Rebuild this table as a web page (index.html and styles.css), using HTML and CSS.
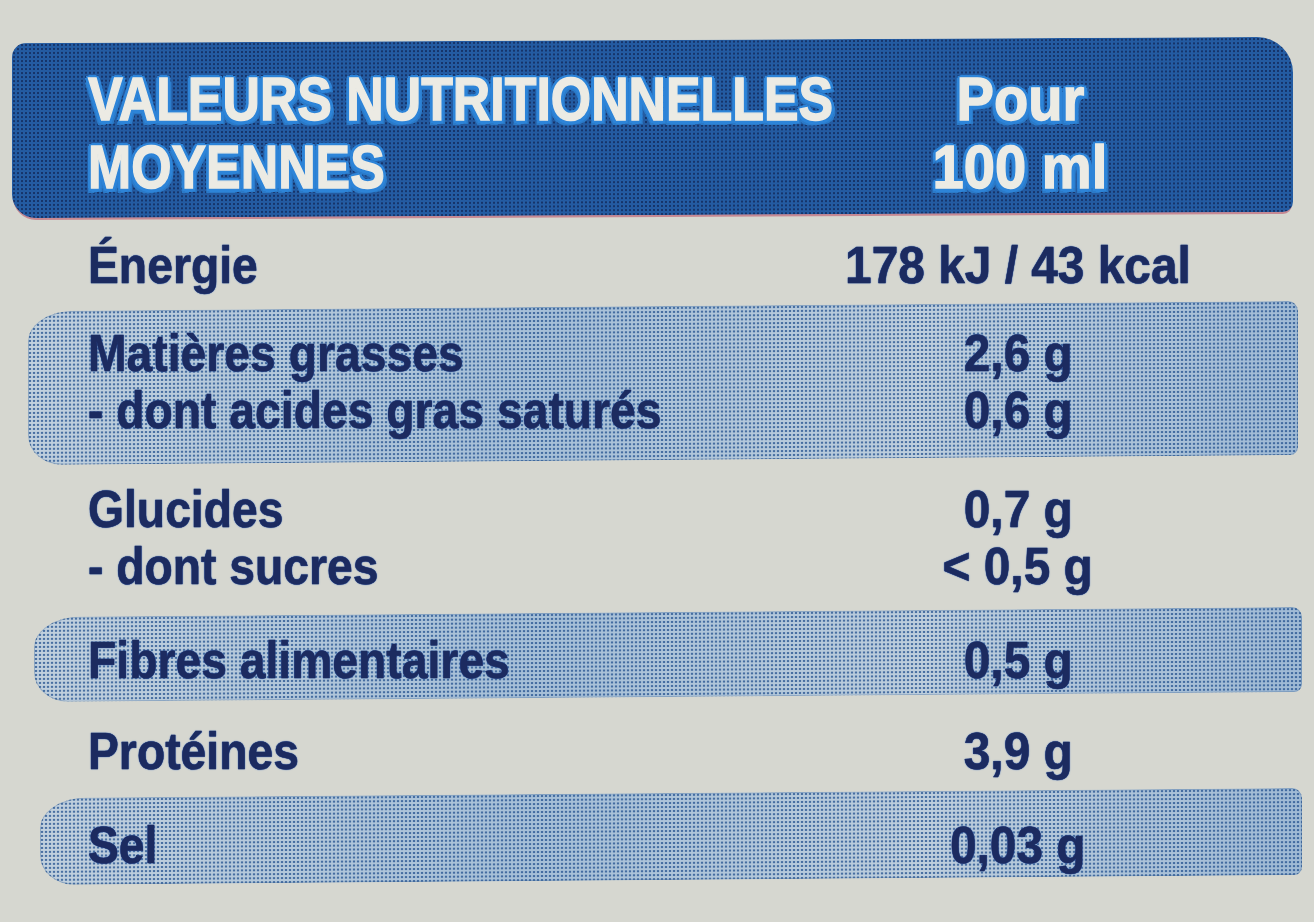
FILE: index.html
```html
<!DOCTYPE html>
<html lang="fr">
<head>
<meta charset="utf-8">
<title>Valeurs nutritionnelles moyennes</title>
<link rel="stylesheet" href="styles.css">
</head>
<body>
<main class="label">
  <header class="head">
    <div class="head-title">
      <span class="hline">VALEURS NUTRITIONNELLES</span>
      <span class="hline">MOYENNES</span>
    </div>
    <div class="head-per">
      <span class="hline">Pour</span>
      <span class="hline">100 ml</span>
    </div>
  </header>

  <section class="row energy">
    <div class="names"><span class="t">Énergie</span></div>
    <div class="vals"><span class="v">178 kJ / 43 kcal</span></div>
  </section>

  <section class="row band band-fat">
    <div class="names"><span class="t">Matières grasses</span><span class="t">- dont acides gras saturés</span></div>
    <div class="vals"><span class="v">2,6 g</span><span class="v">0,6 g</span></div>
  </section>

  <section class="row carbs">
    <div class="names"><span class="t">Glucides</span><span class="t">- dont sucres</span></div>
    <div class="vals"><span class="v">0,7 g</span><span class="v">&lt; 0,5 g</span></div>
  </section>

  <section class="row band band-fibre">
    <div class="names"><span class="t">Fibres alimentaires</span></div>
    <div class="vals"><span class="v">0,5 g</span></div>
  </section>

  <section class="row protein">
    <div class="names"><span class="t">Protéines</span></div>
    <div class="vals"><span class="v">3,9 g</span></div>
  </section>

  <section class="row band band-salt">
    <div class="names"><span class="t">Sel</span></div>
    <div class="vals"><span class="v">0,03 g</span></div>
  </section>
</main>
</body>
</html>
```

FILE: styles.css
```css
* { box-sizing: border-box; }

html, body {
  margin: 0;
  padding: 0;
}

body {
  background: #d6d7d0;
  font-family: "Liberation Sans", Arial, sans-serif;
  font-weight: 700;
  width: 1314px;
  height: 922px;
  overflow: hidden;
}

.label {
  padding-top: 40px;
}

/* ---------- header bar ---------- */
.head {
  position: relative;
  isolation: isolate;
  margin: 0 21px 0 12px;
  height: 175px;
  padding: 25px 143px 0 76px;
  display: grid;
  grid-template-columns: minmax(0, 1fr) 260px;
  color: #ecebe4;
  font-size: 61px;
  line-height: 68px;
}

.head::before {
  content: "";
  position: absolute;
  inset: 0;
  z-index: -1;
  border-radius: 14px 36px 10px 24px;
  background-color: #2a6cb8;
  background-image:
    radial-gradient(circle, rgba(18, 42, 92, 0.85) 1.1px, transparent 1.8px),
    radial-gradient(circle, rgba(22, 56, 118, 0.35) 0.9px, transparent 1.5px);
  background-size: 4px 4px, 4px 4px;
  background-position: 0 0, 2px 2px;
  box-shadow: 0 3px 0 -1px rgba(186, 72, 96, 0.55);
  transform: skewY(-0.28deg);
}

.head-title,
.head-per {
  display: flex;
  flex-direction: column;
  min-width: 0;
}

.head-title { align-items: flex-start; }
.head-per { align-items: center; }

.hline {
  display: inline-block;
  white-space: nowrap;
  -webkit-text-stroke: 1.4px #ecebe4;
  text-shadow:
    4px 0 0 #2d84d8, -4px 0 0 #2d84d8, 0 4px 0 #2d84d8, 0 -3px 0 #2d84d8,
    3px 3px 0 #2d84d8, -3px 3px 0 #2d84d8, 3px -2px 0 #2d84d8, -3px -2px 0 #2d84d8,
    5px 4px 0 #2b7ac8, -4px 5px 0 #2b7ac8;
}

.head-title .hline {
  transform: scaleX(0.85);
  transform-origin: left center;
}

.head-per .hline {
  transform: scaleX(0.92);
  transform-origin: center center;
}

/* ---------- rows ---------- */
.row {
  position: relative;
  isolation: isolate;
  margin: 0 14px 0 30px;
  padding: 0 162px 0 58px;
  display: grid;
  grid-template-columns: minmax(0, 1fr) 240px;
  color: #1c2b60;
  font-size: 52px;
  line-height: 57px;
}

.names,
.vals {
  display: flex;
  flex-direction: column;
  min-width: 0;
}

.names { align-items: flex-start; }
.vals { align-items: center; }

.t,
.v {
  display: inline-block;
  white-space: nowrap;
  -webkit-text-stroke: 0.5px #1c2b60;
  text-shadow: 0 0 1.5px #2f60b8, 0 0 1px #2f60b8;
}

.t {
  transform: scaleX(0.89);
  transform-origin: left center;
}

.v {
  transform: scaleX(0.92);
  transform-origin: center center;
}

.energy { margin-top: 22px; }
.carbs { margin-top: 21px; }
.protein { margin-top: 26px; }

.band-fat {
  margin-top: 12px;
  padding-top: 19px;
  padding-bottom: 21px;
  margin-left: 28px;
  padding-left: 60px;
  margin-right: 16px;
  padding-right: 160px;
}

.band-fibre {
  margin-top: 17px;
  padding-top: 20px;
  padding-bottom: 8px;
  margin-left: 34px;
  padding-left: 54px;
  margin-right: 12px;
  padding-right: 164px;
}

.band-salt {
  margin-top: 13px;
  padding-top: 24px;
  padding-bottom: 6px;
  margin-left: 40px;
  padding-left: 48px;
  margin-right: 12px;
  padding-right: 164px;
}

.band::before {
  content: "";
  position: absolute;
  inset: 0;
  z-index: -1;
  border-radius: 46px 10px 8px 34px / 30px 10px 8px 30px;
  background-color: #c2d1de;
  background-image:
    radial-gradient(circle, rgba(34, 80, 142, 0.85) 0.85px, transparent 1.35px),
    linear-gradient(100deg, rgba(120, 160, 200, 0.0) 0%, rgba(100, 150, 200, 0.3) 40%, rgba(120, 160, 200, 0.05) 70%, rgba(90, 140, 195, 0.34) 100%);
  background-size: 4px 4px, 100% 100%;
  box-shadow: inset 0 0 0 1px rgba(60, 100, 150, 0.35);
  transform: skewY(-0.45deg);
}
```
